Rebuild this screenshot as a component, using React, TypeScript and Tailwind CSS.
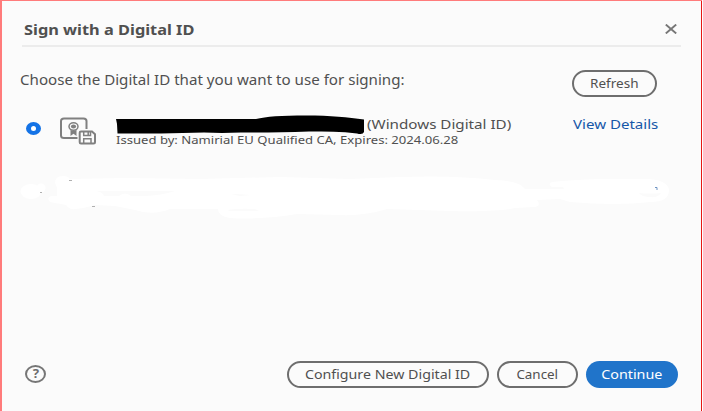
import React from "react";

// Labels are set slightly wide, so each one is stretched from its own anchor.
function Label({ className, children }: { className: string; children: React.ReactNode }) {
  return <span className={`inline-block whitespace-nowrap ${className}`}>{children}</span>;
}

function CertificateIcon() {
  return (
    <svg width="38" height="28" viewBox="0 0 38 28" fill="none" stroke="#808080" className="shrink-0">
      <path d="M18.500 21H5Q2 21 2 18.500V4Q2 1.500 5 1.500H24.500Q27.500 1.500 27.500 4V12" strokeWidth="2" />
      <ellipse cx="14.500" cy="9.500" rx="4.500" ry="3.800" strokeWidth="1.500" />
      <ellipse cx="14.500" cy="9.500" rx="2.600" ry="2.100" fill="#808080" stroke="none" />
      <path d="M11.500 13V19L14.500 16.800L17.500 19V13L14.500 14Z" fill="#808080" stroke="none" />
      <path d="M22 14.500H33L36 17.200V25Q36 26.500 34.500 26.500H22Q20.700 26.500 20.700 25.200V15.700Q20.700 14.500 22 14.500Z" strokeWidth="2" />
      <path d="M24.700 14.500V18.500H31.500V14.500M24.700 26V21.800H32V26" strokeWidth="1.500" />
      <path d="M29.200 15V18" strokeWidth="1.500" />
    </svg>
  );
}

function Redaction() {
  return (
    <svg width="250" height="20" viewBox="0 0 250 20" className="shrink-0">
      <path
        d="M0 5H140C150 2.500 165 1.500 190 1.500C215 1.500 232 3.500 248 5.500V18Q247 21 241 19.500C225 17.500 210 17.500 193 17.500C170 18.500 150 18.500 125 18.500L106 19L88 18.500C60 19.500 30 19.500 1.500 19.500L1 10Z"
        fill="#000"
      />
    </svg>
  );
}

function ErasedRow() {
  return (
    <svg width="660" height="48" viewBox="20 173 660 48" className="block">
      <g fill="#fff">
        <ellipse cx="31" cy="191.500" rx="10.500" ry="7.500" />
        <circle cx="41" cy="188" r="4.500" />
        <path d="M55 183Q55 176 63 176Q68 176 70 179L125 178L200 179L280 177L350 179L400 177Q455 175 495 180Q520 181 525 189L564 189L563 187L552 187Q547 184 552 182Q570 180 600 179H650Q669 181 669 191Q668 202 651 202Q615 206 570 202L560 199L537 200Q542 206 534 207L515 208Q500 212 450 211L387 209Q365 216 340 215L297 214Q260 220 230 218Q218 216 218 209H170Q153 216 135 210L115 206L95 205Q85 208 76 209Q69 210 66 205L50 202Q46 198 51 196H57V188Z" />
      </g>
      <g fill="#fbfbfb">
        <path d="M100 191H175Q160 196 140 196H131Q125 191 119 196H104Q103 192 96 191Z" />
        <path d="M231 194Q240 194 251 195L240 196Z" />
        <path d="M227 210Q240 208 255 209L259 211H230Z" />
        <path d="M639 193Q650 194 661 193Q658 198 650 197Q642 197 639 193Z" />
      </g>
      <path d="M69 180.500H72M40 192.500H42M92 206.500H95" stroke="#b0b0b0" />
      <path d="M655 187.500H657V190" stroke="#6f94c4" fill="none" />
    </svg>
  );
}

function HelpIcon() {
  return (
    <span className="flex h-[18px] w-[21px] items-center justify-center rounded-[50%] border-2 border-[#767676] text-[#6e6e6e]">
      <Label className="scale-x-[1.1] text-[12px] font-bold leading-none">?</Label>
    </span>
  );
}

export default function App() {
  return (
    <div className="flex h-[411px] w-[702px] border-t border-[#ff7b7b] bg-[#fbfbfb] font-['Noto_Sans',sans-serif] text-sm text-[#505050]">
      <div className="w-0.5 shrink-0 bg-[#ff7b7b]" />
      <main className="flex min-w-0 flex-1 flex-col">
        <header className="ml-5 mr-5 flex h-[46px] shrink-0 items-center justify-between border-b-2 border-[#ececec] pl-[2px] pt-3">
          <h1 className="mt-0.5 flex">
            <Label className="origin-left scale-x-[1.168] font-bold">Sign with a Digital ID</Label>
          </h1>
          <button type="button" aria-label="Close" className="mb-px mr-1">
            <svg width="12" height="10" viewBox="0 0 12 10" fill="none" stroke="#777" strokeWidth="2">
              <path d="M.8 .6L11.200 9.400M11.200 .6L.8 9.400" />
            </svg>
          </button>
        </header>

        <section className="ml-[18px] mr-[44px] mt-[22px] flex h-7 shrink-0 items-center justify-between">
          <Label className="mb-1.5 origin-left scale-x-[1.08]">Choose the Digital ID that you want to use for signing:</Label>
          <button type="button" className="flex h-[27px] w-[85px] items-center justify-center rounded-full border-2 border-[#6e6e6e]">
            <Label className="scale-x-[1.04] text-[13px]">Refresh</Label>
          </button>
        </section>

        <section className="ml-6 mr-[42px] mt-[17px] flex h-[38px] shrink-0 items-start">
          <span className="mt-2 flex h-[13px] w-[15px] shrink-0 items-center justify-center rounded-[50%] bg-[#1473e6]">
            <span className="h-[5px] w-[5px] rounded-[50%] bg-white" />
          </span>
          <div className="ml-[18px] mt-[3px] w-[57px] shrink-0">
            <CertificateIcon />
          </div>
          <div className="w-[457px] shrink-0">
            <div className="flex h-[19px] items-center">
              <Redaction />
              <Label className="ml-px mt-0.5 origin-left scale-x-[1.168] text-[13px]">(Windows Digital ID)</Label>
            </div>
            <div className="flex h-[14px] items-center">
              <Label className="origin-left scale-x-[1.19] text-[11px]">Issued by: Namirial EU Qualified CA, Expires: 2024.06.28</Label>
            </div>
          </div>
          <Label className="mt-px origin-left scale-x-[1.16] text-[13px] text-[#1657a8]">View Details</Label>
        </section>

        <div className="ml-[18px] mt-[21px] h-12 shrink-0">
          <ErasedRow />
        </div>

        <footer className="mb-[23px] ml-[23px] mr-[23px] mt-auto flex h-[27px] items-center justify-between">
          <button type="button" aria-label="Help" className="mb-0.5">
            <HelpIcon />
          </button>
          <div className="flex gap-2">
            <button type="button" className="flex h-[27px] w-[202px] items-center justify-center rounded-full border-2 border-[#6e6e6e]">
              <Label className="scale-x-[1.094] text-[13px]">Configure New Digital ID</Label>
            </button>
            <button type="button" className="flex h-[27px] w-[81px] items-center justify-center rounded-full border-2 border-[#6e6e6e]">
              <Label className="scale-x-[1.03] text-[13px]">Cancel</Label>
            </button>
            <button type="button" className="flex h-[27px] w-[92px] items-center justify-center rounded-full bg-[#2074ca] text-white">
              <Label className="scale-x-[1.1] text-[13px]">Continue</Label>
            </button>
          </div>
        </footer>
      </main>
      <div className="w-px shrink-0 bg-[#e51515]" />
    </div>
  );
}
